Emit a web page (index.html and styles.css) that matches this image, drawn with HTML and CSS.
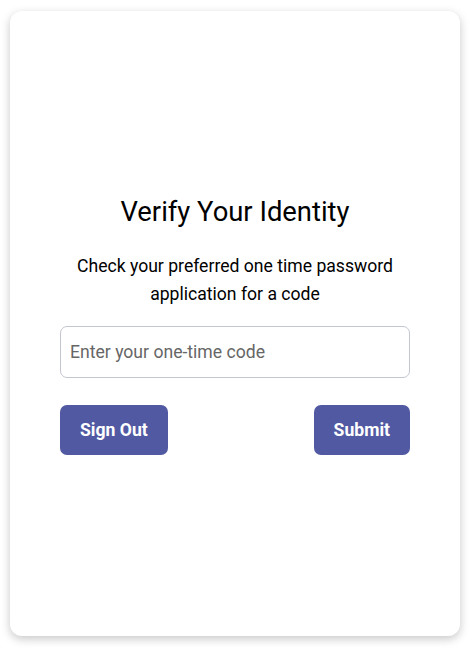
FILE: index.html
```html
<!DOCTYPE html>
<html>
<head>
<meta charset="utf-8">
<link rel="stylesheet" href="styles.css">
</head>
<body>
<div class="card">
  <div class="content">
    <h1 class="title">Verify Your Identity</h1>
    <p class="desc">Check your preferred one time password application for a code</p>
    <input class="code-input" type="text" placeholder="Enter your one-time code">
    <div class="actions">
      <button class="btn">Sign Out</button>
      <button class="btn">Submit</button>
    </div>
  </div>
</div>
</body>
</html>
```
FILE: styles.css
```css
html, body {
  margin: 0;
  background: #ffffff;
}
body {
  padding: 11px 12px 12px 10px;
  font-family: Roboto, "Noto Sans", sans-serif;
}
.card {
  width: 450px;
  height: 625px;
  box-sizing: border-box;
  border-radius: 12px;
  background: #fff;
  box-shadow: 0 3px 10px rgba(0, 0, 0, 0.22);
  display: flex;
  align-items: center;
  justify-content: center;
}
.content {
  width: 350px;
  padding-top: 4px;
  display: flex;
  flex-direction: column;
  align-items: stretch;
}
.title {
  margin: 0;
  font-size: 27.4px;
  font-weight: 400;
  line-height: 30px;
  text-align: center;
  color: #000;
}
.desc {
  margin: 25px 0 0;
  font-size: 17.6px;
  line-height: 28px;
  text-align: center;
  color: #000;
}
.code-input {
  margin-top: 18px;
  height: 52px;
  box-sizing: border-box;
  border: 1px solid #c3c6cf;
  border-radius: 7px;
  padding: 0 9px;
  font-family: Roboto, sans-serif;
  font-size: 17.6px;
  color: #222;
  outline: none;
}
.code-input::placeholder {
  color: #666;
}
.actions {
  margin-top: 27px;
  display: flex;
  justify-content: space-between;
}
.btn {
  height: 50px;
  padding: 0 20px;
  border: none;
  border-radius: 7px;
  background: #5159a3;
  color: #fff;
  font-family: Roboto, sans-serif;
  font-size: 17.6px;
  font-weight: 700;
  cursor: pointer;
}
```
